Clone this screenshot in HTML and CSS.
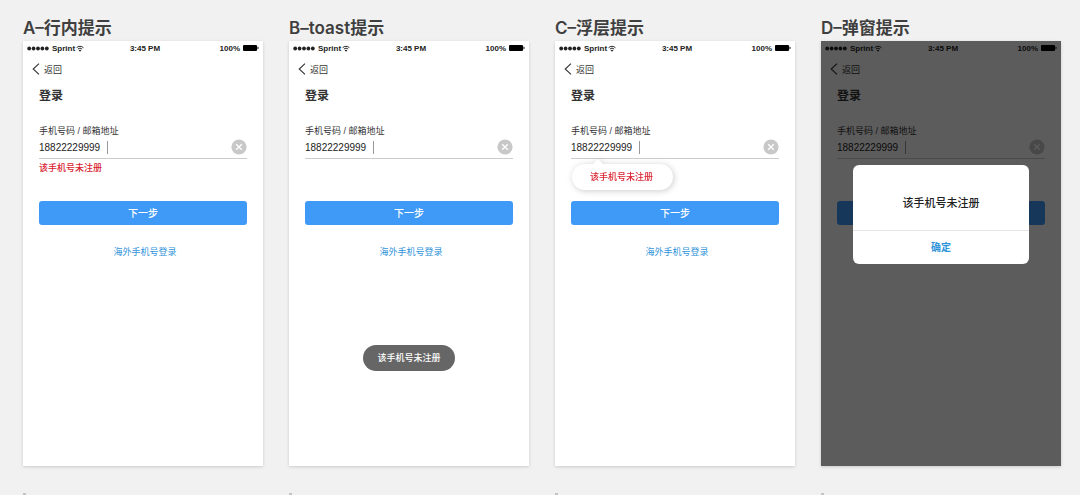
FILE: index.html
```html
<!DOCTYPE html>
<html lang="zh-CN">
<head>
<meta charset="utf-8">
<meta name="viewport" content="width=device-width, initial-scale=1">
<title>登录提示方案</title>
<link rel="stylesheet" href="styles.css">
</head>
<body>
<svg class="sprite" aria-hidden="true">
  <symbol id="dots" viewBox="0 0 22 5">
    <circle cx="2.2" cy="2.5" r="1.9"/><circle cx="6.6" cy="2.5" r="1.9"/><circle cx="11" cy="2.5" r="1.9"/><circle cx="15.4" cy="2.5" r="1.9"/><circle cx="19.8" cy="2.5" r="1.9"/>
  </symbol>
  <symbol id="wifi" viewBox="0 0 14 12">
    <path d="M1 4.6a8.6 8.6 0 0 1 12 0M3.3 7a5.4 5.4 0 0 1 7.4 0" fill="none" stroke="currentColor" stroke-width="1.7"/>
    <path d="M7 11.6L4.6 9.1a3.5 3.5 0 0 1 4.8 0z"/>
  </symbol>
  <symbol id="battery" viewBox="0 0 16 6">
    <rect width="14" height="6" rx="1"/><path d="M14.5 1.6c1.5.3 1.5 2.5 0 2.8z"/>
  </symbol>
  <symbol id="back" viewBox="0 0 8 12">
    <path d="M7 .6L1.200 6L7 11.400" fill="none" stroke="currentColor" stroke-width="1.100"/>
  </symbol>
  <symbol id="clear" viewBox="0 0 16 16">
    <circle cx="8" cy="8" r="7.600" fill="#c8c8c8"/>
    <path d="M5.200 5.200l5.600 5.600M10.800 5.200l-5.600 5.600" stroke="#fff" stroke-width="1.300"/>
  </symbol>
</svg>
<main class="board">
  <section class="variant">
    <h2 class="variant-title">A–行内提示</h2>
    <div class="phone">
      <div class="status"><span class="carrier"><svg class="dots"><use href="#dots"/></svg>Sprint<svg class="wifi"><use href="#wifi"/></svg></span><span class="time">3:45 PM</span><span class="power">100%<svg class="battery"><use href="#battery"/></svg></span></div>
      <a class="back" href="#"><svg class="chevron"><use href="#back"/></svg>返回</a>
      <form class="login">
        <h3 class="heading">登录</h3>
        <label class="label" for="account-a">手机号码 / 邮箱地址</label>
        <div class="field"><input class="account" id="account-a" type="text" value="18822229999"><span class="caret"></span><button class="clear" type="button" aria-label="清除"><svg class="clear-icon"><use href="#clear"/></svg></button></div>
        <div class="message"><p class="error">该手机号未注册</p></div>
        <button class="next" type="button">下一步</button>
        <a class="overseas" href="#">海外手机号登录</a>
      </form>
    </div>
    <div class="mark"></div>
  </section>
  <section class="variant">
    <h2 class="variant-title">B–toast提示</h2>
    <div class="phone">
      <div class="status"><span class="carrier"><svg class="dots"><use href="#dots"/></svg>Sprint<svg class="wifi"><use href="#wifi"/></svg></span><span class="time">3:45 PM</span><span class="power">100%<svg class="battery"><use href="#battery"/></svg></span></div>
      <a class="back" href="#"><svg class="chevron"><use href="#back"/></svg>返回</a>
      <form class="login">
        <h3 class="heading">登录</h3>
        <label class="label" for="account-b">手机号码 / 邮箱地址</label>
        <div class="field"><input class="account" id="account-b" type="text" value="18822229999"><span class="caret"></span><button class="clear" type="button" aria-label="清除"><svg class="clear-icon"><use href="#clear"/></svg></button></div>
        <div class="message"></div>
        <button class="next" type="button">下一步</button>
        <a class="overseas" href="#">海外手机号登录</a>
      </form>
      <div class="toast-layer"><div class="toast" role="status">该手机号未注册</div></div>
    </div>
    <div class="mark"></div>
  </section>
  <section class="variant">
    <h2 class="variant-title">C–浮层提示</h2>
    <div class="phone">
      <div class="status"><span class="carrier"><svg class="dots"><use href="#dots"/></svg>Sprint<svg class="wifi"><use href="#wifi"/></svg></span><span class="time">3:45 PM</span><span class="power">100%<svg class="battery"><use href="#battery"/></svg></span></div>
      <a class="back" href="#"><svg class="chevron"><use href="#back"/></svg>返回</a>
      <form class="login">
        <h3 class="heading">登录</h3>
        <label class="label" for="account-c">手机号码 / 邮箱地址</label>
        <div class="field"><input class="account" id="account-c" type="text" value="18822229999"><span class="caret"></span><button class="clear" type="button" aria-label="清除"><svg class="clear-icon"><use href="#clear"/></svg></button></div>
        <div class="message"><div class="bubble" role="alert">该手机号未注册</div></div>
        <button class="next" type="button">下一步</button>
        <a class="overseas" href="#">海外手机号登录</a>
      </form>
    </div>
    <div class="mark"></div>
  </section>
  <section class="variant">
    <h2 class="variant-title">D–弹窗提示</h2>
    <div class="phone">
      <div class="status"><span class="carrier"><svg class="dots"><use href="#dots"/></svg>Sprint<svg class="wifi"><use href="#wifi"/></svg></span><span class="time">3:45 PM</span><span class="power">100%<svg class="battery"><use href="#battery"/></svg></span></div>
      <a class="back" href="#"><svg class="chevron"><use href="#back"/></svg>返回</a>
      <form class="login">
        <h3 class="heading">登录</h3>
        <label class="label" for="account-d">手机号码 / 邮箱地址</label>
        <div class="field"><input class="account" id="account-d" type="text" value="18822229999"><span class="caret"></span><button class="clear" type="button" aria-label="清除"><svg class="clear-icon"><use href="#clear"/></svg></button></div>
        <div class="message"></div>
        <button class="next" type="button">下一步</button>
      </form>
      <div class="overlay">
        <div class="dialog" role="dialog" aria-label="提示">
          <p class="dialog-text">该手机号未注册</p>
          <button class="confirm" type="button">确定</button>
        </div>
      </div>
    </div>
    <div class="mark"></div>
  </section>
</main>
</body>
</html>
```

FILE: styles.css
```css
* {
  box-sizing: border-box;
}

body {
  margin: 0;
  background: #f1f1f1;
  color: #333;
  font-family: "Liberation Sans", "Noto Sans CJK SC", sans-serif;
  font-size: 9px;
}

h2, h3, p {
  margin: 0;
}

a {
  color: inherit;
  text-decoration: none;
}

button, input {
  padding: 0;
  border: 0;
  background: none;
  color: inherit;
  font-family: inherit;
}

.sprite {
  position: absolute;
  width: 0;
  height: 0;
}

.board {
  display: grid;
  grid-template-columns: repeat(4, 1fr);
  column-gap: 26px;
  min-height: 100vh;
  padding: 15px 19px 0 23px;
  overflow: hidden;
}

.variant {
  display: flex;
  flex-direction: column;
}

.variant-title {
  color: #3f3f3f;
  font-family: Inter, "Noto Sans CJK SC", sans-serif;
  font-size: 17px;
  font-weight: 600;
  line-height: 26px;
}

.phone {
  position: relative;
  flex: 1;
  background: #fff;
  box-shadow: 0 1px 3px rgba(0, 0, 0, 0.16);
}

.mark {
  width: 3px;
  height: 2px;
  margin-top: 27px;
  background: #c4c4c4;
}

.status {
  display: grid;
  grid-template-columns: 1fr auto 1fr;
  align-items: center;
  height: 14px;
  padding: 0 4px;
  color: #222;
  font-size: 8px;
  font-weight: 700;
}

.status svg {
  fill: currentColor;
}

.carrier, .power {
  display: flex;
  align-items: center;
}

.time {
  padding-left: 4px;
}

.power {
  justify-content: flex-end;
  gap: 3px;
}

.dots {
  width: 22px;
  height: 5px;
  margin-right: 3px;
}

.wifi {
  width: 8px;
  height: 7px;
  margin-left: 1px;
}

.battery {
  width: 16px;
  height: 6px;
  color: #000;
}

.back {
  display: inline-flex;
  align-items: center;
  gap: 4px;
  height: 28px;
  padding-left: 9px;
}

.chevron {
  width: 8px;
  height: 12px;
}

.login {
  display: flex;
  flex-direction: column;
  padding: 0 16px;
}

.heading {
  margin-bottom: 16px;
  font-size: 12px;
  line-height: 26px;
}

.label {
  line-height: 12px;
}

.field {
  display: flex;
  align-items: center;
  height: 22px;
  padding-bottom: 1px;
  border-bottom: 1px solid #ccc;
}

.account {
  width: 68px;
  height: 16px;
  color: #222;
  font-size: 10px;
  outline: 0;
}

.caret {
  width: 1px;
  height: 13px;
  background: #999;
}

.clear {
  height: 16px;
  margin-left: auto;
}

.clear-icon {
  display: block;
  width: 16px;
  height: 16px;
}

.message {
  position: relative;
  height: 42px;
}

.error {
  color: #d9222f;
  font-weight: 500;
  line-height: 18px;
}

.bubble {
  position: absolute;
  top: 5px;
  left: 1px;
  height: 26px;
  padding: 0 20px 0 18px;
  border-radius: 13px;
  background: #fff;
  filter: drop-shadow(1px 1px 3px rgba(0, 0, 0, 0.2));
  color: #d9222f;
  font-weight: 500;
  line-height: 26px;
  white-space: nowrap;
}

.bubble::before {
  content: "";
  position: absolute;
  top: -5px;
  left: 21px;
  border: 5px solid transparent;
  border-top: 0;
  border-bottom-color: #fff;
}

.next {
  height: 24px;
  padding-bottom: 2px;
  border-radius: 3px;
  background: #3f99f7;
  color: #fff;
  font-size: 10px;
  font-weight: 500;
}

.overseas {
  align-self: center;
  margin-top: 20px;
  padding-left: 4px;
  color: #2f93da;
  line-height: 14px;
}

.toast-layer {
  position: absolute;
  right: 0;
  bottom: 95px;
  left: 0;
  display: flex;
  justify-content: center;
}

.toast {
  padding: 0 14px;
  border-radius: 13px;
  background: #666;
  color: #fff;
  font-weight: 500;
  line-height: 26px;
}

.overlay {
  position: absolute;
  inset: 0;
  padding: 124px 32px 0;
  background: rgba(0, 0, 0, 0.64);
}

.dialog {
  overflow: hidden;
  border-radius: 6px;
  background: #fff;
  text-align: center;
}

.dialog-text {
  padding: 25px 0 13px;
  border-bottom: 1px solid #e6e6e6;
  color: #222;
  font-size: 11px;
  font-weight: 500;
  line-height: 27px;
}

.confirm {
  width: 100%;
  height: 33px;
  padding-bottom: 3px;
  color: #2f93da;
  font-size: 10px;
  font-weight: 700;
}
```
